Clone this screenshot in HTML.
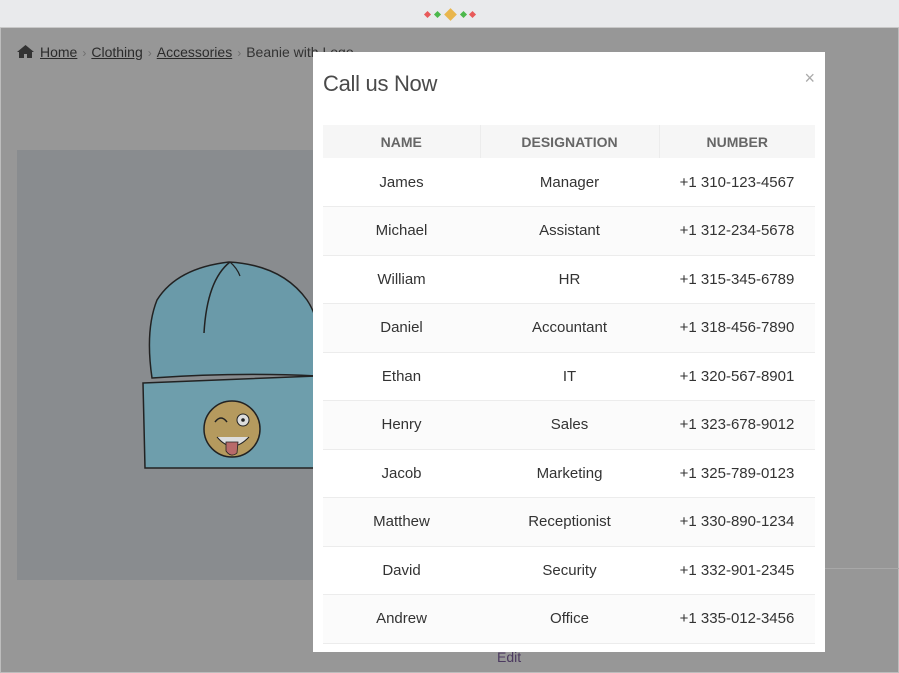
<!DOCTYPE html>
<html><head><meta charset="utf-8"><style>
*{margin:0;padding:0;box-sizing:border-box}
body{width:899px;height:673px;overflow:hidden;font-family:"Liberation Sans",sans-serif;background:#979797;position:relative}
.top{position:absolute;left:0;top:0;width:899px;height:28px;background:#e9eaec;border-bottom:1px solid #c8c8c8}
.d{position:absolute;transform:rotate(45deg)}
.frame{position:absolute;left:0;top:28px;width:899px;height:645px;border:1px solid #bdbdbd;border-top:none}
.bc{position:absolute;left:17px;top:44px;font-size:14px;color:#333}
.bc a{color:#2b2b2b;text-decoration:underline}
.bc .s{color:#6f6f6f;margin:0 5px;font-size:12px}
.panel{position:absolute;left:17px;top:150px;width:300px;height:430px;background:#898c8f}
.modal{position:absolute;left:313px;top:52px;width:512px;height:600px;background:#fff}
.title{position:absolute;left:10px;top:19px;font-size:22px;font-weight:normal;color:#4a4a4a;letter-spacing:-0.3px}
.x{position:absolute;right:10px;top:16px;font-size:18px;color:#aaa}
table{position:absolute;left:10px;top:73px;width:492px;border-collapse:collapse;font-size:15px;color:#333}
th{height:33px;background:#f6f6f6;color:#666;font-weight:bold;font-size:14px;border-right:1px solid #ececec}
th:last-child{border-right:none}
td{height:48.5px;text-align:center;border-bottom:1px solid #ececec;background:#fbfbfb}
tr:nth-child(even) td{background:#fff}
</style></head><body>
<div class="top">
<div class="d" style="left:425px;top:12px;width:5px;height:5px;background:#e85a5a"></div>
<div class="d" style="left:435px;top:12px;width:5px;height:5px;background:#4cb84c"></div>
<div class="d" style="left:446px;top:10px;width:9px;height:9px;background:#e9b64d"></div>
<div class="d" style="left:461px;top:12px;width:5px;height:5px;background:#4cb84c"></div>
<div class="d" style="left:470px;top:12px;width:5px;height:5px;background:#e85a5a"></div>
</div>
<div class="frame"></div>
<div class="bc"><svg width="17" height="13" viewBox="0 0 17 13" style="vertical-align:-1px;margin-right:6px"><path d="M8.5 0L0 7h2v6h5V9h3v4h5V7h2z" fill="#333"/></svg><a>Home</a><span class="s">›</span><a>Clothing</a><span class="s">›</span><a>Accessories</a><span class="s">›</span>Beanie with Logo</div>
<div class="panel">
<svg width="300" height="430" viewBox="0 0 300 430">
<path d="M135 228 Q128 180 140 150 Q160 118 212 112 Q265 115 290 150 Q300 165 300 180 L300 226 Q220 222 135 228Z" fill="#6a9aa9" stroke="#222" stroke-width="1.5"/>
<path d="M213 112 Q190 130 187 183" fill="none" stroke="#222" stroke-width="1.5"/>
<path d="M213 112 Q220 118 223 126" fill="none" stroke="#222" stroke-width="1.2"/>
<path d="M126 233 L300 226 L300 318 Q210 318 128 318 Z" fill="#6e9eac" stroke="#222" stroke-width="1.5"/>
<circle cx="215" cy="279" r="28" fill="#b59a5e" stroke="#222" stroke-width="1.5"/>
<circle cx="226" cy="270" r="6" fill="#ddd" stroke="#222"/>
<circle cx="226" cy="270" r="1.8" fill="#222"/>
<path d="M198 272 Q204 264 210 272" fill="none" stroke="#222" stroke-width="1.5"/>
<path d="M200 287 Q215 305 232 287" fill="#ddd" stroke="#222"/>
<path d="M209 292 L221 292 L220 303 Q214 308 209 301Z" fill="#b86a6a" stroke="#222" stroke-width="0.8"/>
</svg></div>
<div style="position:absolute;left:825px;top:568px;width:74px;height:1px;background:#a8a8a8"></div>
<div style="position:absolute;left:497px;top:649px;font-size:14px;color:#4c3a60">Edit</div>
<div class="modal">
<div class="title">Call us Now</div>
<div class="x">×</div>
<table>
<tr><th style="width:157px">NAME</th><th style="width:179px">DESIGNATION</th><th>NUMBER</th></tr>
<tr><td>James</td><td>Manager</td><td>+1 310-123-4567</td></tr>
<tr><td>Michael</td><td>Assistant</td><td>+1 312-234-5678</td></tr>
<tr><td>William</td><td>HR</td><td>+1 315-345-6789</td></tr>
<tr><td>Daniel</td><td>Accountant</td><td>+1 318-456-7890</td></tr>
<tr><td>Ethan</td><td>IT</td><td>+1 320-567-8901</td></tr>
<tr><td>Henry</td><td>Sales</td><td>+1 323-678-9012</td></tr>
<tr><td>Jacob</td><td>Marketing</td><td>+1 325-789-0123</td></tr>
<tr><td>Matthew</td><td>Receptionist</td><td>+1 330-890-1234</td></tr>
<tr><td>David</td><td>Security</td><td>+1 332-901-2345</td></tr>
<tr><td>Andrew</td><td>Office</td><td>+1 335-012-3456</td></tr>
</table>
</div>
</body></html>
